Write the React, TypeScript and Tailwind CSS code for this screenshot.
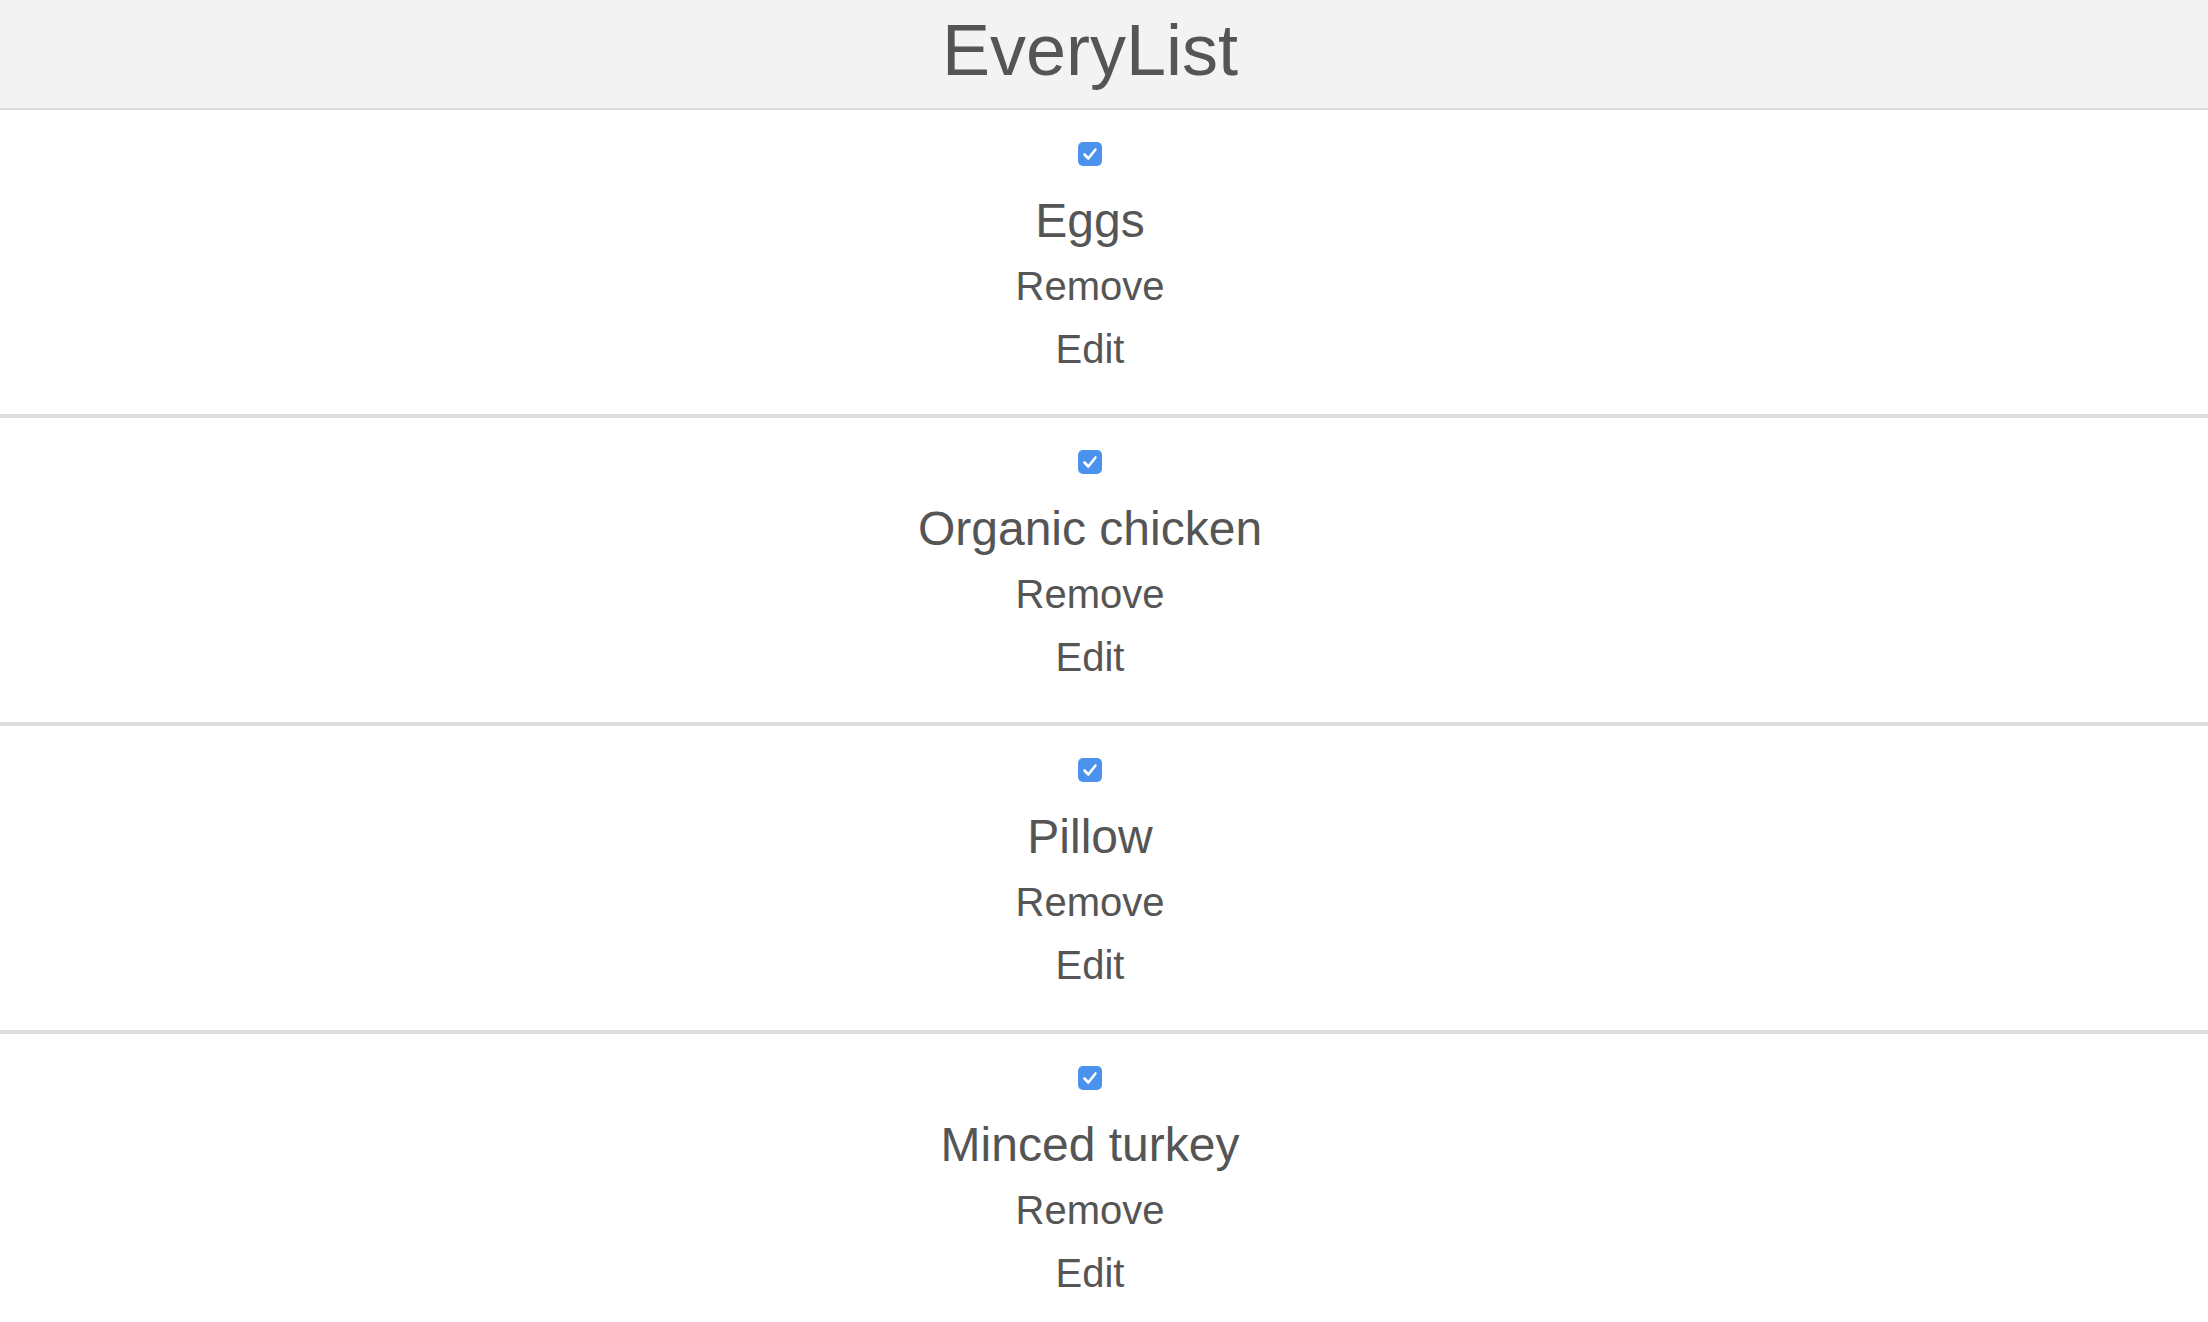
import { useState } from 'react'

const initialItems = [
  { id: 1, name: 'Eggs', done: true },
  { id: 2, name: 'Organic chicken', done: true },
  { id: 3, name: 'Pillow', done: true },
  { id: 4, name: 'Minced turkey', done: true },
]

function Check({ checked, onToggle }: { checked: boolean; onToggle: () => void }) {
  return (
    <button
      onClick={onToggle}
      className={
        'w-6 h-6 rounded-[5px] flex items-center justify-center ' +
        (checked ? 'bg-[#4b92ec]' : 'bg-white border-2 border-[#bbb]')
      }
    >
      {checked && (
        <svg viewBox="0 0 24 24" className="w-6 h-6" fill="none">
          <path d="M6.5 12.5l3.8 4 7.2-9" stroke="white" strokeWidth="2.6" strokeLinecap="round" strokeLinejoin="round" />
        </svg>
      )}
    </button>
  )
}

export default function App() {
  const [items, setItems] = useState(initialItems)

  const toggle = (id: number) =>
    setItems(items.map((i) => (i.id === id ? { ...i, done: !i.done } : i)))
  const remove = (id: number) => setItems(items.filter((i) => i.id !== id))

  return (
    <div className="min-h-screen bg-white text-[#555] font-['Liberation_Sans',Arial,sans-serif]">
      <header className="h-[110px] bg-[#f3f3f3] border-b-2 border-[#dcdcdc] pr-7">
        <h1 className="text-center text-[72px] leading-[100px]">EveryList</h1>
      </header>

      <ul>
        {items.map((item) => (
          <li key={item.id} className="border-b-4 border-[#dddddd] pr-7">
            <div className="flex flex-col items-center pt-8 pb-[33px]">
              <Check checked={item.done} onToggle={() => toggle(item.id)} />
              <div className="mt-5 h-[69px] text-[48px] leading-[69px]">{item.name}</div>
              <button onClick={() => remove(item.id)} className="h-[63px] text-[40px] leading-[63px]">
                Remove
              </button>
              <button className="h-[63px] text-[40px] leading-[63px]">Edit</button>
            </div>
          </li>
        ))}
      </ul>
    </div>
  )
}
